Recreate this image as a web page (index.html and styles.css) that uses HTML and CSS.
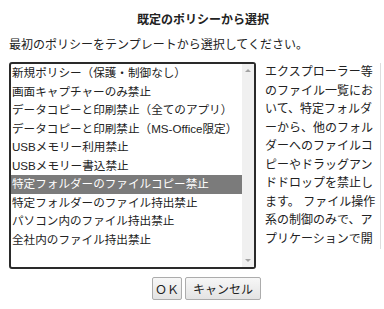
FILE: index.html
```html
<!DOCTYPE html>
<html lang="ja">
<head>
  <meta charset="UTF-8">
  <meta name="viewport" content="width=device-width, initial-scale=1.0">
  <title>既定のポリシーから選択</title>
  <link rel="stylesheet" href="styles.css">
</head>
<body>
  <div class="dialog">
    <h1 class="title">既定のポリシーから選択</h1>
    <p class="lead">最初のポリシーをテンプレートから選択してください。</p>

    <div class="content">
      <div class="listbox">
        <ul class="options">
          <li>新規ポリシー（保護・制御なし）</li>
          <li>画面キャプチャーのみ禁止</li>
          <li>データコピーと印刷禁止（全てのアプリ）</li>
          <li>データコピーと印刷禁止（MS-Office限定）</li>
          <li>USBメモリー利用禁止</li>
          <li>USBメモリー書込禁止</li>
          <li class="selected">特定フォルダーのファイルコピー禁止</li>
          <li>特定フォルダーのファイル持出禁止</li>
          <li>パソコン内のファイル持出禁止</li>
          <li>全社内のファイル持出禁止</li>
        </ul>
        <div class="scrollbar">
          <span class="arrow up"></span>
          <span class="arrow down"></span>
        </div>
      </div>

      <div class="desc">
        エクスプローラー等<br>のファイル一覧にお<br>いて、特定フォルダ<br>ーから、他のフォル<br>ダーへのファイルコ<br>ピーやドラッグアン<br>ドドロップを禁止し<br>ます。 ファイル操作<br>系の制御のみで、ア<br>プリケーションで開
      </div>
    </div>

    <div class="buttons">
      <button class="btn ok">ＯＫ</button>
      <button class="btn">キャンセル</button>
    </div>
  </div>
</body>
</html>
```

FILE: styles.css
```css
:root{
  --text-color:#222;
  --border-dark:#2a2a2a;
  --selected-bg:#7b7b7b;
  --track-color:#f0f0f0;
  --arrow-color:#a3a3a3;
}
*{
  margin:0;
  padding:0;
  box-sizing:border-box;
}
body{
  background-color:#fff;
  color:var(--text-color);
  font-family:"Liberation Sans","Noto Sans CJK JP",sans-serif;
  font-size:12px;
}
.dialog{
  padding:11px 0 0 9px;
}
.title{
  font-size:12px;
  font-weight:700;
  line-height:18px;
  text-align:center;
  padding-left:13px;
}
.lead{
  margin-top:7px;
  line-height:18px;
}
.content{
  display:flex;
  margin-top:8px;
}
.listbox{
  display:flex;
  width:247px;
  height:207px;
  border:2px solid var(--border-dark);
  border-radius:3px;
}
.options{
  list-style:none;
  flex:1;
  overflow:hidden;
  font-size:11.6px;
}
.options li{
  height:18.5px;
  line-height:18.5px;
  padding-left:1px;
  white-space:nowrap;
}
.options .selected{
  background-color:var(--selected-bg);
  color:#fff;
}
.scrollbar{
  width:12px;
  background-color:var(--track-color);
  display:flex;
  flex-direction:column;
  justify-content:space-between;
  align-items:center;
  padding:5px 0;
}
.arrow{
  width:0;
  height:0;
  border-left:3px solid transparent;
  border-right:3px solid transparent;
}
.arrow.up{
  border-bottom:3px solid var(--arrow-color);
}
.arrow.down{
  border-top:3px solid var(--arrow-color);
}
.desc{
  margin:1px 0 0 9px;
  width:116px;
  height:186px;
  line-height:18.5px;
  overflow:hidden;
  border-right:1px solid #ddd;
}
.buttons{
  display:flex;
  justify-content:center;
  gap:3px;
  margin-top:8px;
  padding-left:20px;
}
.btn{
  height:23px;
  padding:0 7px;
  font-family:inherit;
  font-size:12px;
  color:var(--text-color);
  background:linear-gradient(#f7f7f7,#e3e3e3);
  border:1px solid #acacac;
  border-radius:2px;
}
.btn.ok{
  width:30px;
  padding:0;
}
```
